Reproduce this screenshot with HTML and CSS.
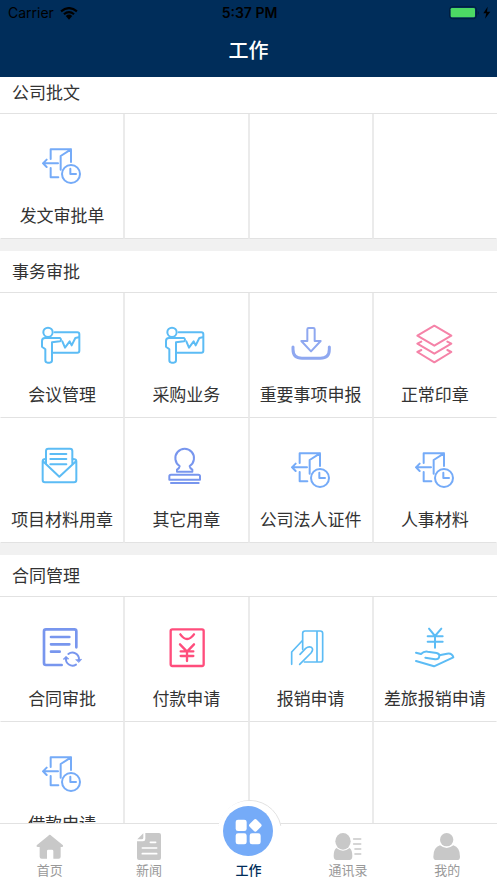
FILE: index.html
```html
<!DOCTYPE html>
<html lang="zh-CN">
<head>
<meta charset="utf-8">
<meta name="viewport" content="width=device-width, initial-scale=1">
<title>工作</title>
<link rel="stylesheet" href="styles.css">
</head>
<body>
<svg class="defs" aria-hidden="true">
  <symbol id="door" viewBox="0 0 144 144">
    <path d="M38 51V22H99V60M38 78V106H61M99 22L68 42V83M15 64H60M26 53L15 64L26 75"/>
    <circle cx="99" cy="96" r="27"/><path d="M97 80V96H114"/>
  </symbol>
  <symbol id="present" viewBox="0 0 144 144">
    <circle cx="30" cy="34" r="14"/>
    <path d="M50 34H118Q124 34 124 40V89Q124 95 118 95H46"/>
    <path d="M21 51H66Q72 56 66 61L42 64V118Q42 125 35 125H29Q22 125 22 118V85L12 77V60Q12 51 21 51Z"/>
    <path d="M73 61L81 80L95 61L101 73L112 51L122 49"/>
  </symbol>
  <symbol id="download" viewBox="0 0 144 144">
    <path stroke-width="9" d="M18 78V85Q18 112 45 112H100Q127 112 127 85V78"/>
    <path d="M61 60V25Q61 21 65 21H79Q83 21 83 25V60H101L72 91L43 60Z"/>
  </symbol>
  <symbol id="layers" viewBox="0 0 144 144">
    <path d="M70 14L121 44L70 74L19 44ZM31 62L19 68L70 98L121 68L109 62M31 87L19 93L70 124L121 93L109 87"/>
  </symbol>
  <symbol id="mail" viewBox="0 0 144 144">
    <path d="M24 52V15Q24 8 31 8H96Q103 8 103 15V52"/>
    <path d="M23 39Q14 39 14 46V102Q14 109 21 109H108Q115 109 115 102V46Q115 39 104 39M15 46L64 92L114 46"/>
    <path d="M37 24H85M37 39H85M37 55H85"/>
  </symbol>
  <symbol id="stamp" viewBox="0 0 144 144">
    <path d="M53 60A28 28 0 1 1 83 60Q84 67 91 71V77H45V71Q52 67 53 60Z"/>
    <path d="M22 101V91Q22 86 27 86H109Q114 86 114 91V101ZM27 111H110"/>
  </symbol>
  <symbol id="contract" viewBox="0 0 144 144">
    <path stroke-width="8" d="M115 67V19Q115 13 109 13H24Q18 13 18 19V114Q18 120 24 120H71M39 36H94M39 58H94M39 80H65"/>
    <path stroke-width="6" d="M84 99A20 20 0 0 0 114 119M91 87A20 20 0 0 1 123 104"/>
    <path fill="currentColor" stroke-width="2" d="M76 102L84 94L92 101ZM114 104L131 103L123 112Z"/>
  </symbol>
  <symbol id="pay" viewBox="0 0 144 144">
    <rect x="26" y="13" width="99" height="110" rx="5"/>
    <path d="M55 28Q75 56 96 28M54 58L75 80L96 58M75 80V108M56 79H94M56 93H94"/>
  </symbol>
  <symbol id="card" viewBox="0 0 144 144">
    <path d="M47 73V25Q47 18 54 18H100Q107 18 107 25V104Q107 111 100 111H52M90 18V111"/>
    <path d="M14 118V81L45 48M38 118L72 84Q81 72 73 67Q65 63 56 70L39 88"/>
  </symbol>
  <symbol id="travel" viewBox="0 0 144 144">
    <path d="M54 11L72 33L91 11M72 33V68M50 34H95M50 50H95"/>
    <path d="M15 83L30 87Q39 78 50 80L77 84Q87 87 85 94Q83 104 72 103L43 98M85 91L108 86Q123 83 127 97L69 124L15 108"/>
  </symbol>
</svg>

<header class="topbar">
  <div class="status">
    <div class="carrier">Carrier
      <svg class="wifi" viewBox="0 0 48 36" aria-hidden="true"><path d="M2 12Q24-6 46 12M10 20Q24 8 38 20" fill="none" stroke="currentColor" stroke-width="6"/><path d="M15 25Q24 17 33 25L24 35Z" fill="currentColor"/></svg>
    </div>
    <div class="time">5:37 PM</div>
    <div class="power">
      <svg class="battery" viewBox="0 0 126 42" aria-hidden="true"><rect x="2" y="2" width="80" height="36" rx="8" fill="none" stroke="#001c3c" stroke-width="3"/><rect x="5" y="6" width="73" height="28" rx="4" fill="#4cd964"/><path d="M86 14Q93 20 86 27Z" fill="#001c3c"/><path d="M116 2L103 22H112L108 38L124 17H114Z"/></svg>
    </div>
  </div>
  <h1>工作</h1>
</header>

<main class="content">
  <section>
    <h2>公司批文</h2>
    <div class="grid">
      <button class="cell blue"><svg><use href="#door"/></svg><span>发文审批单</span></button>
      <div class="cell"></div><div class="cell"></div><div class="cell"></div>
    </div>
  </section>
  <section>
    <h2>事务审批</h2>
    <div class="grid">
      <button class="cell sky"><svg><use href="#present"/></svg><span>会议管理</span></button>
      <button class="cell sky"><svg><use href="#present"/></svg><span>采购业务</span></button>
      <button class="cell violet"><svg><use href="#download"/></svg><span>重要事项申报</span></button>
      <button class="cell pink"><svg><use href="#layers"/></svg><span>正常印章</span></button>
      <button class="cell sky"><svg><use href="#mail"/></svg><span>项目材料用章</span></button>
      <button class="cell indigo"><svg><use href="#stamp"/></svg><span>其它用章</span></button>
      <button class="cell blue"><svg><use href="#door"/></svg><span>公司法人证件</span></button>
      <button class="cell blue"><svg><use href="#door"/></svg><span>人事材料</span></button>
    </div>
  </section>
  <section>
    <h2>合同管理</h2>
    <div class="grid">
      <button class="cell indigo"><svg><use href="#contract"/></svg><span>合同审批</span></button>
      <button class="cell red"><svg><use href="#pay"/></svg><span>付款申请</span></button>
      <button class="cell sky thin"><svg><use href="#card"/></svg><span>报销申请</span></button>
      <button class="cell sky"><svg><use href="#travel"/></svg><span>差旅报销申请</span></button>
      <button class="cell blue"><svg><use href="#door"/></svg><span>借款申请</span></button>
      <div class="cell"></div><div class="cell"></div><div class="cell"></div>
    </div>
  </section>
</main>

<nav class="tabs">
  <a href="#home"><svg viewBox="0 0 90 90"><path d="M44 8Q47 8 49 11L84 40Q86 45 81 45H77V74Q77 80 71 80H55V57Q55 53 51 53H40Q36 53 36 57V80H20Q14 80 14 74V45H8Q3 45 5 40L40 11Q42 8 44 8Z"/></svg>首页</a>
  <a href="#news"><svg viewBox="0 0 90 90"><path d="M34 3H75Q81 3 81 9V78Q81 84 75 84H15Q9 84 9 78V28H27Q34 28 34 21Z"/><path d="M28 4V17Q28 22 23 22H10Z"/><path d="M49 31H65M25 48H68M25 65H68" fill="none" stroke="#fff" stroke-width="5" stroke-linecap="round"/></svg>新闻</a>
  <a href="#work" class="active" aria-current="page"><span class="bubble"><svg viewBox="0 0 90 90"><rect x="8" y="11" width="33" height="34" rx="7"/><rect x="8" y="52" width="33" height="33" rx="7"/><rect x="50" y="52" width="33" height="33" rx="7"/><rect x="52" y="13" width="30" height="30" rx="6" transform="rotate(45 67 28)"/></svg></span>工作</a>
  <a href="#contacts"><svg viewBox="0 0 90 90"><ellipse cx="30" cy="28" rx="23" ry="25"/><path d="M10 48Q30 64 50 48Q58 54 58 72Q58 84 49 84H11Q2 84 2 72Q2 54 10 48Z"/><path d="M62 21H83M62 36H83M66 51H83M66 66H83" fill="none" stroke="#c8c8c8" stroke-width="5" stroke-linecap="round"/></svg>通讯录</a>
  <a href="#me"><svg viewBox="0 0 90 90"><circle cx="44" cy="23" r="20"/><path d="M24 40Q44 56 64 40Q84 46 84 74Q84 84 75 84H13Q4 84 4 74Q4 46 24 40Z"/></svg>我的</a>
</nav>
</body>
</html>
```
FILE: styles.css
```css
* { box-sizing: border-box; }

body {
  margin: 0;
  height: 100vh;
  display: flex;
  flex-direction: column;
  overflow: hidden;
  background: #fff;
  color: #333;
  font-family: "Noto Sans CJK SC", sans-serif;
}

.defs { position: absolute; width: 0; height: 0; }

.topbar {
  position: relative;
  z-index: 1;
  flex: none;
  background: #002d5a;
}

.status {
  display: grid;
  grid-template-columns: 1fr auto 1fr;
  align-items: center;
  height: 26px;
  padding: 0 6px 0 8px;
  color: #000;
  font: 14px/26px Inter, sans-serif;
}

.carrier { display: flex; align-items: center; gap: 6px; }
.wifi { width: 18px; height: 13px; }
.time { font-weight: 600; }
.power { display: flex; justify-content: flex-end; }
.battery { width: 42px; height: 14px; }

h1 {
  margin: 0;
  height: 51px;
  color: #fff;
  font-size: 20px;
  font-weight: 500;
  line-height: 48px;
  text-align: center;
}

.content {
  flex: 1;
  min-height: 0;
  overflow: hidden;
  background: #f1f1f1;
}

section { margin-bottom: 12px; background: #fff; }
section:first-child { margin-top: -5px; }

h2 {
  margin: 0;
  height: 42px;
  padding-left: 12px;
  border-bottom: 1px solid #e2e2e2;
  font-size: 17px;
  font-weight: 400;
  line-height: 40px;
}

.grid { display: grid; grid-template-columns: repeat(4, 1fr); }

.cell {
  display: flex;
  flex-direction: column;
  align-items: center;
  gap: 13px;
  height: 125px;
  margin: 0;
  padding: 28px 0 0;
  border: 1px solid #ebebeb;
  border-top: 0;
  border-bottom-color: #e2e2e2;
  background: none;
  font: inherit;
}
.cell:nth-child(4n + 1) { border-left-color: transparent; }
.cell:nth-child(4n) { border-right-color: transparent; }

.cell svg {
  width: 48px;
  height: 48px;
  fill: none;
  stroke: currentColor;
  stroke-width: 6px;
  stroke-linejoin: round;
  stroke-linecap: round;
}

.cell span {
  color: #333;
  font-size: 17px;
  line-height: 24px;
  white-space: nowrap;
}

.blue { color: #75abf8; }
.sky { color: #5cbcf5; }
.violet { color: #8fa8f0; }
.indigo { color: #7896ee; }
.pink { color: #f583a8; }
.red { color: #ff4d7c; }
.red svg { stroke-width: 7px; }
.thin svg { stroke-width: 5px; }

.tabs {
  position: relative;
  flex: none;
  display: grid;
  grid-template-columns: repeat(5, 1fr);
  height: 60px;
  border-top: 1px solid #e2e2e2;
  background: #fff;
}

/* Arc that rises above the bar behind the active tab */
.tabs::before {
  content: "";
  position: absolute;
  top: -24px;
  left: 50%;
  width: 62px;
  height: 62px;
  margin-left: -31px;
  border: 1px solid #e2e2e2;
  border-radius: 50%;
  background: #fff;
  clip-path: inset(0 0 38px 0);
}

.tabs a {
  position: relative;
  display: flex;
  flex-direction: column;
  align-items: center;
  padding-top: 8px;
  color: #999;
  font-size: 13px;
  line-height: 15px;
  text-decoration: none;
}

.tabs svg { width: 30px; height: 30px; fill: #c8c8c8; }

.tabs .active { padding-top: 38px; color: #002d5a; font-weight: 500; }

.bubble {
  position: absolute;
  top: -18px;
  left: 50%;
  display: grid;
  place-items: center;
  width: 50px;
  height: 50px;
  margin-left: -25px;
  border-radius: 50%;
  background: #75abf8;
  box-shadow: 0 0 0 5px #fff;
}

.tabs .bubble svg { fill: #fff; }
```
